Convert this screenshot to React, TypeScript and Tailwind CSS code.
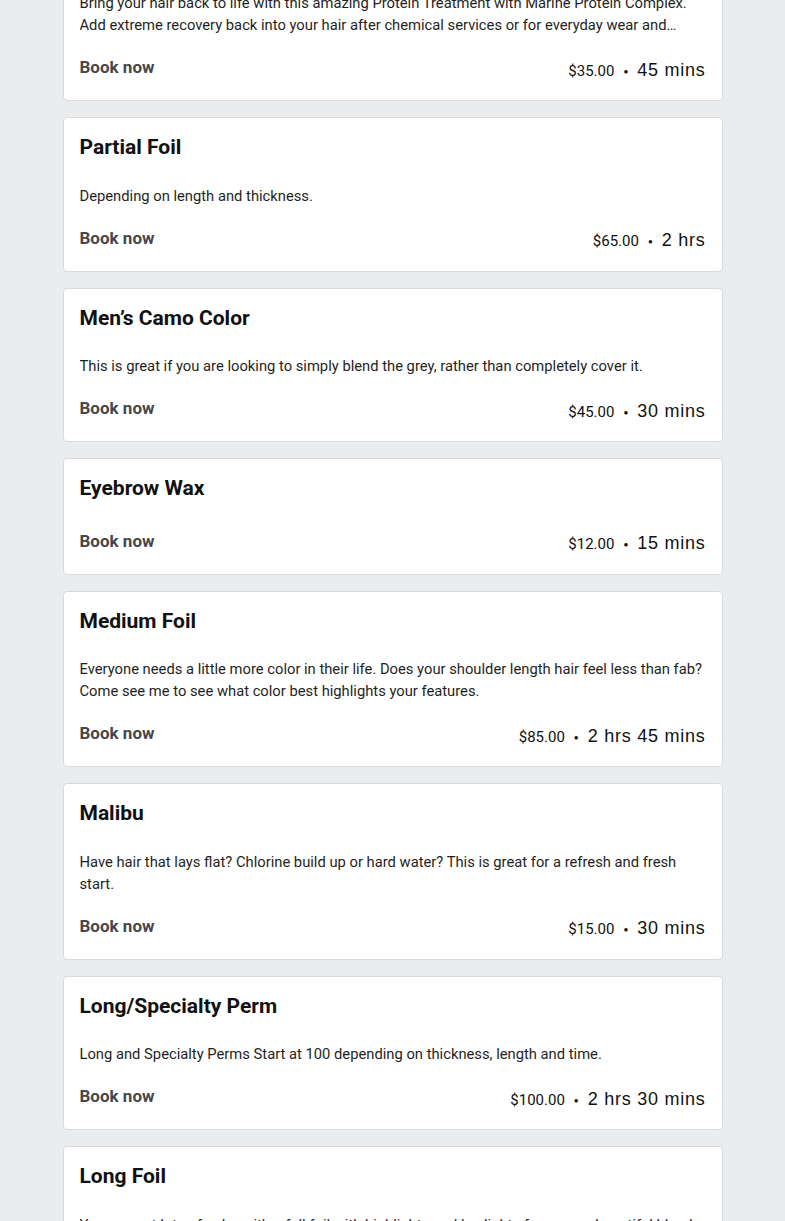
import React from 'react';

interface Service {
  id: number;
  name: string;
  description?: string;
  price: string;
  duration: string;
}

const services: Service[] = [
  {
    id: 1,
    name: 'Protein Treatment',
    description:
      'Bring your hair back to life with this amazing Protein Treatment with Marine Protein Complex. Add extreme recovery back into your hair after chemical services or for everyday wear and tear.\u00A0Leaves your hair soft and shiny.',
    price: '$35.00',
    duration: '45 mins',
  },
  {
    id: 2,
    name: 'Partial Foil',
    description: 'Depending on length and thickness.',
    price: '$65.00',
    duration: '2 hrs',
  },
  {
    id: 3,
    name: 'Men\u2019s Camo Color',
    description: 'This is great if you are looking to simply blend the grey, rather than completely cover it.',
    price: '$45.00',
    duration: '30 mins',
  },
  {
    id: 4,
    name: 'Eyebrow Wax',
    price: '$12.00',
    duration: '15 mins',
  },
  {
    id: 5,
    name: 'Medium Foil',
    description:
      'Everyone needs a little more color in their life. Does your shoulder length hair feel less than fab? Come see me to see what color best highlights your features.',
    price: '$85.00',
    duration: '2 hrs 45 mins',
  },
  {
    id: 6,
    name: 'Malibu',
    description:
      'Have hair that lays flat? Chlorine build up or hard water? This is great for a refresh and fresh start.',
    price: '$15.00',
    duration: '30 mins',
  },
  {
    id: 7,
    name: 'Long/Specialty Perm',
    description: 'Long and Specialty Perms Start at 100 depending on thickness, length and time.',
    price: '$100.00',
    duration: '2 hrs 30 mins',
  },
  {
    id: 8,
    name: 'Long Foil',
    description:
      'You can get lots of color with a full foil with highlights and lowlights for a more beautiful blend and shine.',
    price: '$125.00',
    duration: '3 hrs',
  },
];

const ServiceCard: React.FC<{ service: Service }> = ({ service }) => (
  <div className="bg-white rounded border border-[#d9dadc] p-4">
    <h3 className="text-[21px] leading-[26.5px] font-bold text-[#111] mb-6">{service.name}</h3>
    {service.description && (
      <p className="text-[14.75px] leading-[22px] text-[#1f1f1f] mb-4 line-clamp-2">{service.description}</p>
    )}
    <div className="flex items-center justify-between h-8">
      <span className="text-[17px] font-bold text-[#47474a]">Book now</span>
      <div className="flex items-baseline text-[#111] mt-[4px]">
        <span className="text-[15px]">{service.price}</span>
        <span className="mx-[9px] text-[8px] relative -top-[2px]">{'\u25CF'}</span>
        <span className="text-[18px] tracking-[0.75px] font-['Liberation_Sans',Arial,sans-serif]">
          {service.duration}
        </span>
      </div>
    </div>
  </div>
);

export default function App() {
  return (
    <div className="min-h-screen bg-[#ebecee] font-['Roboto',sans-serif] overflow-hidden">
      <div className="w-[660px] mx-auto flex flex-col gap-4 -mt-[75.5px]">
        {services.map((s) => (
          <ServiceCard key={s.id} service={s} />
        ))}
      </div>
    </div>
  );
}
